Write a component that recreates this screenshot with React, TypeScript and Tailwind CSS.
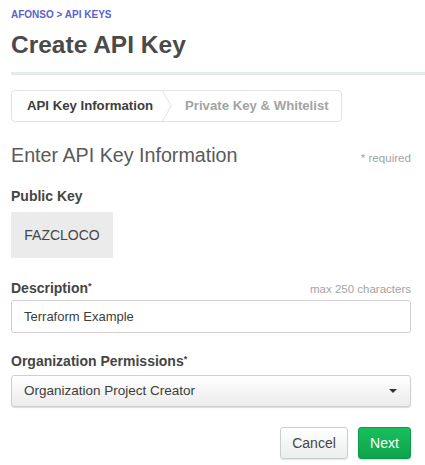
export default function App() {
  return (
    <div className="min-h-[465px] w-[425px] overflow-hidden bg-white font-['Liberation_Sans',Arial,sans-serif]">
      <div className="pl-[11px] pt-[9px]">
        <div className="text-[10px] font-bold leading-[12px] text-[#5b5fd0]">AFONSO &gt; API KEYS</div>
        <h1 className="mt-[10px] text-[24.5px] font-bold leading-[28px] text-[#4a4a4a]">Create API Key</h1>
        <div className="mt-[13px] h-[3px] bg-[#e5ebe9]" />
      </div>

      <div className="px-[11px]">
        <div className="mt-[15px] flex h-[32px] w-[331px] items-stretch rounded-[4px] border border-[#e3e3e3] text-[13.2px] font-bold">
          <div className="flex items-center pl-[15px] pr-[9px] text-[#3d3d3d]">API Key Information</div>
          <svg width="10" height="30" viewBox="0 0 10 30" className="shrink-0">
            <path d="M0.5 0 L9 15 L0.5 30" fill="none" stroke="#e3e3e3" strokeWidth="1" />
          </svg>
          <div className="flex items-center pl-[13px] text-[#a3a3a3]">Private Key &amp; Whitelist</div>
        </div>

        <div className="mt-[21px] flex w-[400px] items-baseline justify-between">
          <h2 className="text-[19.7px] font-normal leading-[25px] text-[#5a5a5a]">Enter API Key Information</h2>
          <span className="text-[11.6px] text-[#a3a3a3]">* required</span>
        </div>

        <div className="mt-[20px] text-[14px] font-bold leading-[16px] text-[#454545]">Public Key</div>
        <div className="mt-[8px] flex h-[46px] w-[102px] items-center justify-center bg-[#ebebeb] text-[14px] text-[#454545]">
          FAZCLOCO
        </div>

        <div className="mt-[22px] flex w-[400px] items-end justify-between">
          <div className="text-[14px] font-bold leading-[16px] text-[#454545]">
            Description<sup className="text-[9px]">*</sup>
          </div>
          <span className="text-[11.5px] leading-[14px] text-[#a3a3a3]">max 250 characters</span>
        </div>
        <div className="mt-[4px] flex h-[33px] w-[400px] items-center rounded-[3px] border border-[#cfcfcf] px-[12px] text-[13px] text-[#3d3d3d]">
          Terraform Example
        </div>

        <div className="mt-[20px] text-[14px] font-bold leading-[16px] text-[#454545]">
          Organization Permissions<sup className="text-[9px]">*</sup>
        </div>
        <div className="mt-[6px] flex h-[32px] w-[400px] items-center justify-between rounded-[3px] border border-[#cfcfcf] bg-gradient-to-b from-white to-[#ececec] px-[12px] text-[13.5px] text-[#3d3d3d] shadow-[0_1px_1px_rgba(0,0,0,0.15)]">
          <span>Organization Project Creator</span>
          <svg width="8" height="4" viewBox="0 0 8 4" className="mr-[1px]">
            <path d="M0 0 H8 L4 4 Z" fill="#333" />
          </svg>
        </div>

        <div className="mt-[20px] flex w-[400px] justify-end gap-[10px]">
          <button className="h-[32px] w-[68px] rounded-[3px] border border-[#c9cfcd] bg-gradient-to-b from-white to-[#eaeeed] text-[14px] text-[#454545] shadow-[0_1px_1px_rgba(0,0,0,0.1)]">
            Cancel
          </button>
          <button className="h-[32px] w-[53px] rounded-[3px] border border-[#0c9a48] bg-gradient-to-b from-[#18bf5c] to-[#0ea34e] text-[14px] text-white shadow-[0_1px_1px_rgba(0,0,0,0.15)]">
            Next
          </button>
        </div>
      </div>
    </div>
  )
}
